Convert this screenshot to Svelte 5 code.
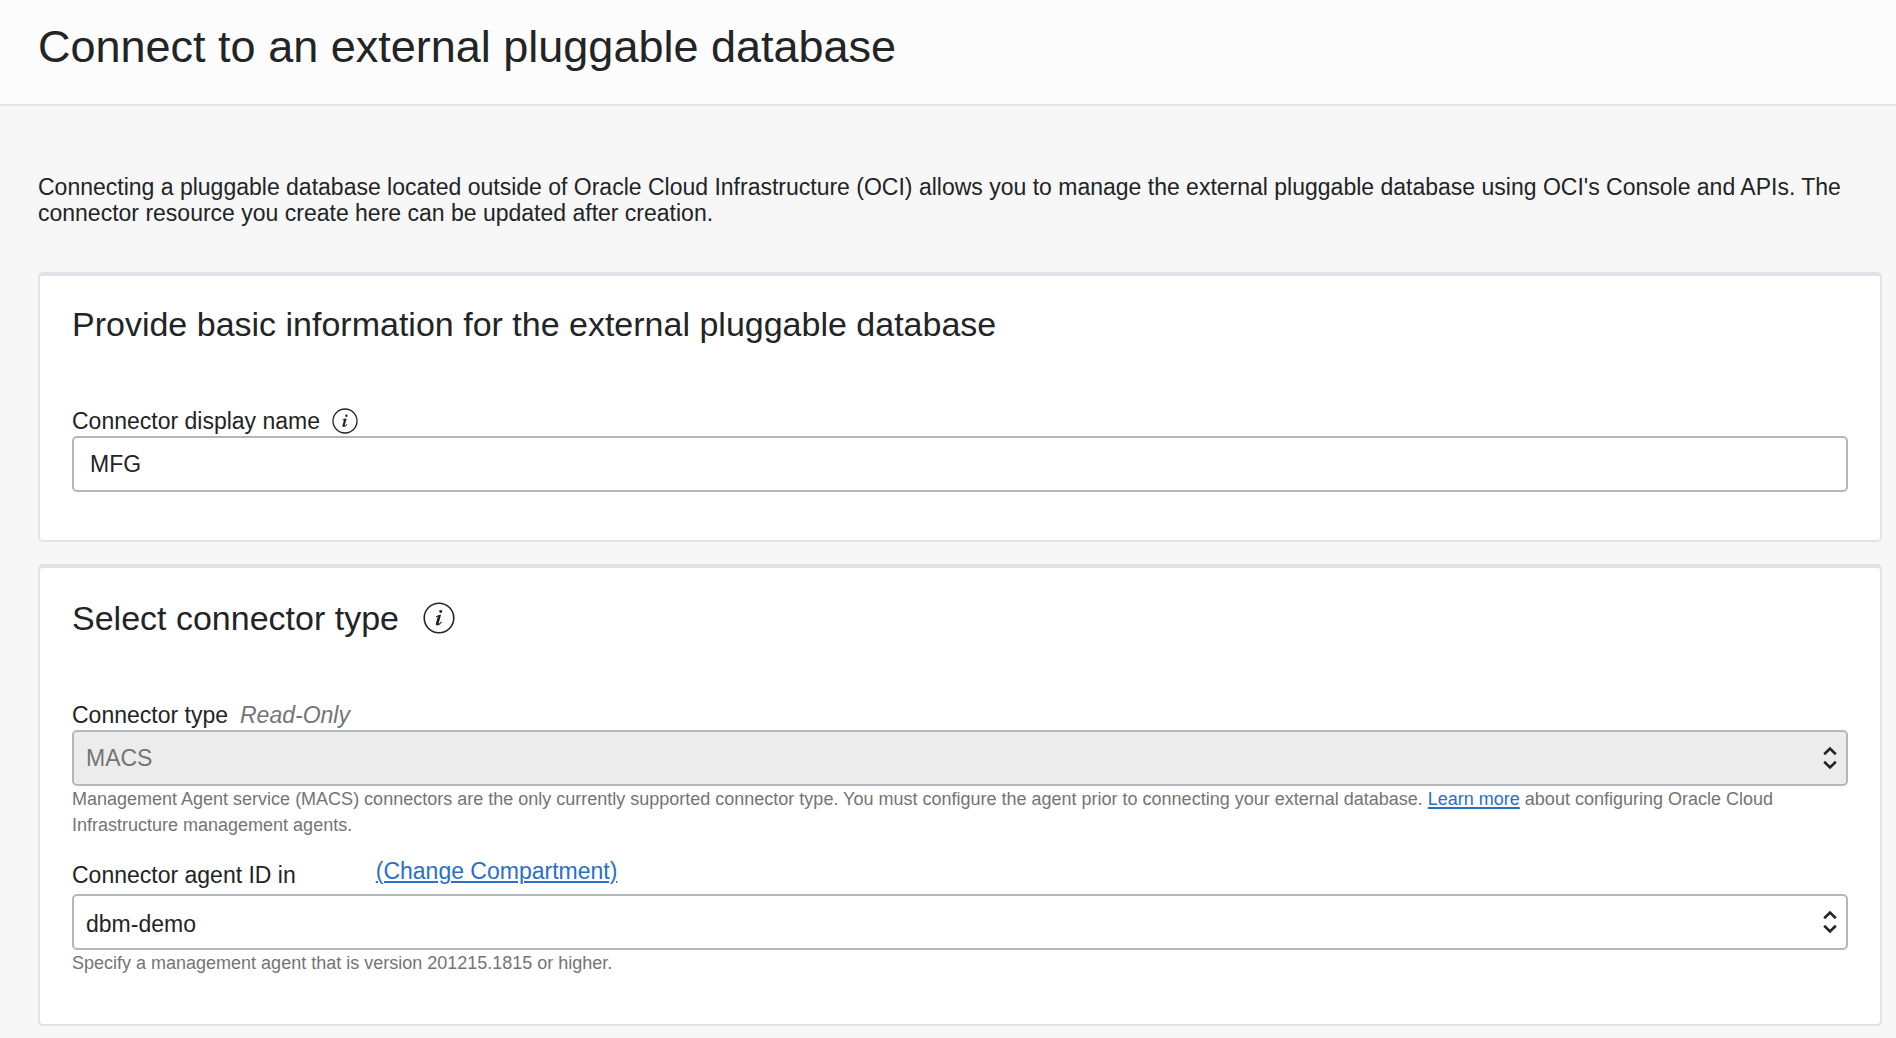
<script>
  let displayName = $state('MFG');
  let connectorType = $state('MACS');
  let agent = $state('dbm-demo');
</script>

{#snippet infoIcon()}
  <svg viewBox="0 0 26 26" aria-hidden="true">
    <circle cx="13" cy="13" r="12" fill="none" stroke="currentColor" stroke-width="1.3" />
    <circle cx="14.4" cy="7.7" r="1.2" fill="currentColor" />
    <path d="M10.4 11.8 Q12.6 10.2 14.7 10.4 L12.8 17 Q12.6 17.9 13.4 17.3 L14.9 15.9 L15.4 16.4 Q13.4 19 11.5 19 Q10 19 10.5 17.2 L12 12 L10.6 12.4 Z" fill="currentColor" />
  </svg>
{/snippet}

{#snippet chevrons()}
  <svg class="chevrons" viewBox="0 0 14 24" aria-hidden="true">
    <path d="M1.2 8.2 L7 2.6 L12.8 8.2 M1.2 15.8 L7 21.4 L12.8 15.8" fill="none" stroke="currentColor" stroke-width="2.6" />
  </svg>
{/snippet}

<header>
  <h1>Connect to an external pluggable database</h1>
</header>

<main>
  <p class="intro">
    Connecting a pluggable database located outside of Oracle Cloud Infrastructure (OCI) allows you to manage the external pluggable database using OCI's Console and APIs. The connector resource you create here can be updated after creation.
  </p>

  <section class="card">
    <h2>Provide basic information for the external pluggable database</h2>
    <div class="label-row">
      <label for="display-name">Connector display name</label>
      <button type="button" class="info" aria-label="About the display name">{@render infoIcon()}</button>
    </div>
    <input id="display-name" class="control" type="text" bind:value={displayName} />
  </section>

  <section class="card">
    <div class="heading-row">
      <h2>Select connector type</h2>
      <button type="button" class="info large" aria-label="About connector types">{@render infoIcon()}</button>
    </div>
    <div class="label-row">
      <label for="connector-type">Connector type</label>
      <em>Read-Only</em>
    </div>
    <div class="picker">
      <select id="connector-type" class="control" disabled bind:value={connectorType}>
        <option>MACS</option>
      </select>
      {@render chevrons()}
    </div>
    <p class="hint">
      Management Agent service (MACS) connectors are the only currently supported connector type. You must configure the agent prior to connecting your external database. <a href="#learn">Learn more</a> about configuring Oracle Cloud Infrastructure management agents.
    </p>

    <div class="label-row agent">
      <label for="agent-id">Connector agent ID in</label>
      <a href="#compartment">(Change Compartment)</a>
    </div>
    <div class="picker low">
      <select id="agent-id" class="control" bind:value={agent}>
        <option>dbm-demo</option>
      </select>
      {@render chevrons()}
    </div>
    <p class="hint">Specify a management agent that is version 201215.1815 or higher.</p>
  </section>
</main>

<style>
  :global(body) {
    margin: 0;
    background: #f7f7f7;
    color: #222425;
    font: 23px/26px "Liberation Sans", Arial, sans-serif;
  }

  h1, h2, p {
    margin: 0;
    font-weight: 400;
  }

  header {
    padding: 21px 38px 31px;
    background: #fcfcfc;
    border-bottom: 2px solid #e5e5e5;
  }

  h1 {
    font-size: 45px;
    line-height: 52px;
  }

  main {
    display: flex;
    flex-direction: column;
    gap: 22px;
    padding: 68px 14px 12px 38px;
  }

  .intro {
    padding-right: 24px;
    margin-bottom: 24px;
  }

  .card {
    background: #fff;
    border: 2px solid #e1e2e7;
    border-top-width: 4px;
    border-radius: 5px;
    padding: 28px 32px 48px;
  }

  .heading-row {
    display: flex;
    align-items: center;
    gap: 24px;
    padding-top: 2px;
  }

  h2 {
    font-size: 34px;
    line-height: 40px;
  }

  .label-row {
    display: flex;
    align-items: center;
    gap: 12px;
    margin-bottom: 2px;
    padding-top: 64px;
    height: 26px;
  }

  .info {
    display: flex;
    width: 26px;
    height: 26px;
    padding: 0;
    border: 0;
    background: none;
    color: inherit;
  }

  .info.large {
    width: 32px;
    height: 32px;
  }

  .info svg {
    width: 100%;
    height: 100%;
  }

  em {
    color: #747474;
  }

  .control {
    display: block;
    box-sizing: border-box;
    width: 100%;
    height: 56px;
    margin: 0;
    padding: 0 16px;
    border: 2px solid #b3b7bd;
    border-radius: 5px;
    background: #fff;
    color: inherit;
    font: inherit;
    appearance: none;
  }

  .picker {
    display: grid;
    align-items: center;
  }

  .picker > :global(*) {
    grid-area: 1 / 1;
  }

  .picker .control {
    padding: 0 12px;
  }

  .picker.low .control {
    padding-top: 4px;
  }

  .picker .control:disabled {
    background: #ececec;
    color: #747474;
    opacity: 1;
  }

  .chevrons {
    justify-self: end;
    width: 14px;
    height: 24px;
    margin-right: 11px;
    pointer-events: none;
  }

  .hint {
    color: #747474;
    font-size: 18px;
  }

  a {
    color: #2a6fc9;
    text-decoration-thickness: 2px;
    text-underline-offset: 2px;
  }

  .label-row.agent {
    align-items: flex-start;
    gap: 80px;
    height: 34px;
    padding-top: 20px;
  }

  .agent label {
    padding-top: 4px;
  }
</style>
